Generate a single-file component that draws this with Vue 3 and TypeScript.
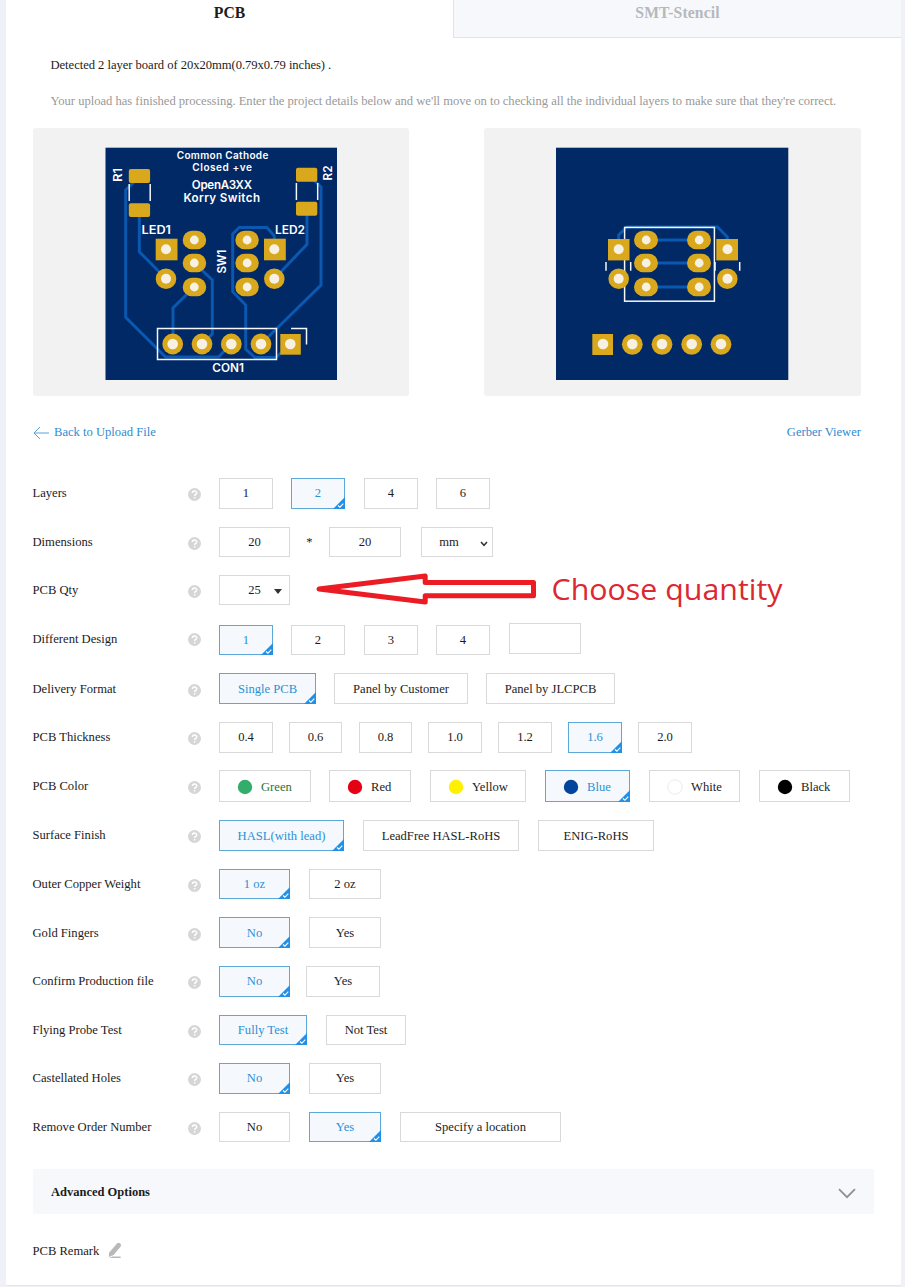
<script setup lang="ts">
interface Option {
  text: string
  gap: number
  width: number
  kind?: 'star' | 'select' | 'dropdown' | 'input' | 'color'
  active?: boolean
  color?: string
}
interface Row {
  label: string
  pitch: number
  height: number
  labelLine: number
  textLine: number
  icon: number
  options: Option[]
}

const opt = (text: string, gap: number, width: number, extra: Partial<Option> = {}): Option => ({ text, gap, width, ...extra })
const on = { active: true }
const row = (label: string, pitch: number, height: number, labelLine: number, textLine: number, icon: number, options: Option[]): Row =>
  ({ label, pitch, height, labelLine, textLine, icon, options })
const swatch = (text: string, gap: number, width: number, color: string, active = false): Option =>
  opt(text, gap, width, { kind: 'color', color, active })

const rows: Row[] = [
  row('Layers', 49, 31, 30, 30, 16.3, [opt('1', 0, 54), opt('2', 18, 54, on), opt('4', 19, 54), opt('6', 18, 54)]),
  row('Dimensions', 48, 30, 30, 30, 16, [
    opt('20', 0, 71), opt('*', 0, 39, { kind: 'star' }), opt('20', 0, 72), opt('mm', 20, 72, { kind: 'select' }),
  ]),
  row('PCB Qty', 50, 30, 30, 30, 16.5, [opt('25', 0, 71, { kind: 'dropdown' })]),
  row('Different Design', 48, 30, 28, 30, 14.7, [
    opt('1', 0, 54, on), opt('2', 18, 54), opt('3', 19, 54), opt('4', 18, 54), opt('', 19, 72, { kind: 'input' }),
  ]),
  row('Delivery Format', 49, 31, 32, 32, 17, [opt('Single PCB', 0, 97, on), opt('Panel by Customer', 18, 134), opt('Panel by JLCPCB', 18, 129)]),
  row('PCB Thickness', 48, 31, 30, 30, 16.6, [
    opt('0.4', 0, 54), opt('0.6', 16, 53), opt('0.8', 17, 53), opt('1.0', 16, 54), opt('1.2', 16, 54), opt('1.6', 16, 54, on), opt('2.0', 16, 54),
  ]),
  row('PCB Color', 50, 32, 32, 34, 17, [
    swatch('Green', 0, 92, '#33ad6c'), swatch('Red', 18, 82, '#e60013'), swatch('Yellow', 19, 96, '#fff000'),
    swatch('Blue', 19, 85, '#03459c', true), swatch('White', 19, 91, '#ffffff'), swatch('Black', 19, 91, '#000000'),
  ]),
  row('Surface Finish', 49, 31, 30, 32, 16.3, [opt('HASL(with lead)', 0, 125, on), opt('LeadFree HASL-RoHS', 19, 156), opt('ENIG-RoHS', 19, 116)]),
  row('Outer Copper Weight', 48, 30, 30, 30, 16.3, [opt('1 oz', 0, 71, on), opt('2 oz', 19, 72)]),
  row('Gold Fingers', 49, 31, 32, 32, 17, [opt('No', 0, 71, on), opt('Yes', 19, 72)]),
  row('Confirm Production file', 49, 31, 30, 30, 16.5, [opt('No', 0, 71, on), opt('Yes', 16, 74)]),
  row('Flying Probe Test', 48, 30, 30, 30, 16, [opt('Fully Test', 0, 88, on), opt('Not Test', 19, 80)]),
  row('Castellated Holes', 49, 31, 30, 30, 16.5, [opt('No', 0, 71, on), opt('Yes', 19, 72)]),
  row('Remove Order Number', 57, 30, 30, 30, 16, [opt('No', 0, 71), opt('Yes', 19, 72, on), opt('Specify a location', 19, 161)]),
]

const rowVars = (r: Row) => ({
  '--pitch': `${r.pitch}px`, '--h': `${r.height}px`, '--ll': `${r.labelLine}px`, '--tl': `${r.textLine - 2}px`, '--icon': `${r.icon - 6.5}px`,
})
const optVars = (o: Option) => ({ '--gap': `${o.gap}px`, '--w': `${o.width}px` })

const ovalRows = [240, 263, 287]
const frontPins = [172.7, 202, 231.3, 261]
const backPins = [632.3, 662, 691.7, 721]
</script>

<template>
  <div class="page">
    <main class="card">
      <nav class="tabs">
        <div class="tab current">PCB</div>
        <div class="tab other">SMT-Stencil</div>
      </nav>

      <p class="detected">Detected 2 layer board of 20x20mm(0.79x0.79 inches) .</p>
      <p class="notice">Your upload has finished processing. Enter the project details below and we'll move on to checking all the individual layers to make sure that they're correct.</p>

      <section class="previews">
        <svg class="preview front" viewBox="33 128 376 268">
          <rect class="board" x="105.5" y="147.7" width="231.5" height="232.3" />
          <g class="trace">
            <path d="M135 181L125.7 190V317.3L165.5 357H218.5L231 344" />
            <path d="M139.3 212V251.7L166 278.7" />
            <path d="M194.3 263L212.3 280V334L202 344" />
            <path d="M194.3 287L173 308V344" />
            <path d="M274.3 249V236L267 227.5H239.3L232.7 234V291.7L245.7 305V349L255 357.5H276L290 344" />
            <path d="M307 210V244.3L274.3 278.7" />
            <path d="M308 174L321 187V285L261 344" />
          </g>
          <g class="silk">
            <path d="M129.2 184V201M150.2 184V201M296.4 183V200M317.7 183V200" />
            <rect x="157.5" y="328.5" width="119" height="31" />
            <path d="M291 328.5H306.5V344.5" />
          </g>
          <g class="pad">
            <rect x="128.8" y="169" width="21.3" height="14" rx="2" />
            <rect x="128.8" y="203.2" width="21.3" height="13.8" rx="2" />
            <rect x="296" y="167.7" width="21.3" height="14" rx="2" />
            <rect x="296" y="201.7" width="21.3" height="14" rx="2" />
            <rect x="155.7" y="238.7" width="21.8" height="21.6" />
            <rect x="264" y="238.7" width="21.8" height="21.6" />
            <circle cx="166" cy="278.7" r="10.3" />
            <circle cx="274.3" cy="278.7" r="10.3" />
            <template v-for="y in ovalRows" :key="y">
              <rect x="182.7" :y="y - 9.2" width="23.5" height="18.4" rx="9.2" />
              <rect x="235.3" :y="y - 9.2" width="23.5" height="18.4" rx="9.2" />
            </template>
            <circle v-for="x in frontPins" :key="x" :cx="x" cy="344" r="10.4" />
            <rect x="280.3" y="334" width="20.5" height="20.7" />
          </g>
          <g class="hole">
            <circle cx="166" cy="249.3" r="5" />
            <circle cx="274.3" cy="249.3" r="5" />
            <circle cx="166" cy="278.7" r="5" />
            <circle cx="274.3" cy="278.7" r="5" />
            <template v-for="y in ovalRows" :key="y">
              <circle cx="194.3" :cy="y" r="4.4" />
              <circle cx="247.1" :cy="y" r="4.4" />
            </template>
            <circle v-for="x in frontPins" :key="x" :cx="x" cy="344" r="5.3" />
            <circle cx="290.3" cy="344" r="5.3" />
          </g>
          <g class="mark">
            <text class="small" x="176.7" y="158.8" textLength="91.6">Common Cathode</text>
            <text class="small" x="192.3" y="170.8" textLength="59.6">Closed +ve</text>
            <text x="191.8" y="189.2" textLength="60.2">OpenA3XX</text>
            <text x="183.5" y="202.2" textLength="76.5">Korry Switch</text>
            <text x="141.6" y="234" textLength="29.4" lengthAdjust="spacingAndGlyphs">LED1</text>
            <text x="275" y="234" textLength="30" lengthAdjust="spacingAndGlyphs">LED2</text>
            <text x="212.3" y="371.6" textLength="31.6" lengthAdjust="spacingAndGlyphs">CON1</text>
            <text transform="translate(122.3 182) rotate(-90)" textLength="14.2" lengthAdjust="spacingAndGlyphs">R1</text>
            <text transform="translate(332.3 180.4) rotate(-90)" textLength="15" lengthAdjust="spacingAndGlyphs">R2</text>
            <text transform="translate(226 273.6) rotate(-90)" textLength="24" lengthAdjust="spacingAndGlyphs">SW1</text>
          </g>
        </svg>

        <svg class="preview back" viewBox="484 128 377 268">
          <rect class="board" x="556" y="147.7" width="232.3" height="232.3" />
          <g class="trace">
            <path d="M618.7 249V235L627 227H717.5L727.3 237V249" />
            <path v-for="y in ovalRows" :key="y" :d="`M646 ${y}H699`" />
          </g>
          <g class="silk">
            <rect x="624.6" y="227.4" width="89.8" height="73.8" />
            <path d="M606 262V270.7M630.7 262V270.7M715 262V270.7M739.7 262V270.7" />
          </g>
          <g class="pad">
            <rect x="608" y="239" width="21.5" height="21.4" />
            <rect x="716.3" y="239" width="21.7" height="21.4" />
            <circle cx="618.7" cy="278.8" r="10.3" />
            <circle cx="727.3" cy="278.8" r="10.3" />
            <template v-for="y in ovalRows" :key="y">
              <rect x="634" :y="y - 9.2" width="24" height="18.4" rx="9.2" />
              <rect x="687" :y="y - 9.2" width="24" height="18.4" rx="9.2" />
            </template>
            <rect x="592.3" y="334" width="20.7" height="21" />
            <circle v-for="x in backPins" :key="x" :cx="x" cy="344.3" r="10.4" />
          </g>
          <g class="hole">
            <circle cx="618.7" cy="249.3" r="5" />
            <circle cx="727.5" cy="249.3" r="5" />
            <circle cx="618.7" cy="278.8" r="5" />
            <circle cx="727.5" cy="278.8" r="5" />
            <template v-for="y in ovalRows" :key="y">
              <circle cx="646.2" :cy="y" r="4.4" />
              <circle cx="699.2" :cy="y" r="4.4" />
            </template>
            <circle cx="603" cy="344" r="5.3" />
            <circle v-for="x in backPins" :key="x" :cx="x" cy="344" r="5.3" />
          </g>
        </svg>
      </section>

      <div class="links">
        <a class="link">
          <svg class="back-arrow" viewBox="0 0 17 14"><path d="M7 1L1 7L7 13M1 7H16" /></svg>
          <span>Back to Upload File</span>
        </a>
        <a class="link">Gerber Viewer</a>
      </div>

      <section class="form">
        <div v-for="r in rows" :key="r.label" class="row" :style="rowVars(r)">
          <div class="label">{{ r.label }}</div>
          <svg class="help" viewBox="0 0 13 13">
            <circle cx="6.5" cy="6.5" r="6.5" />
            <path d="M4.4 5.1C4.4 2.3 8.7 2.4 8.7 4.9C8.7 6.4 6.6 6.2 6.6 8M6.6 9V10.4" />
          </svg>
          <div class="options">
            <div
              v-for="(o, i) in r.options"
              :key="i"
              class="option"
              :class="[o.kind, { active: o.active, green: o.text === 'Green', white: o.text === 'White' }]"
              :style="optVars(o)"
            >
              <svg v-if="o.kind === 'color'" class="dot" viewBox="0 0 16 16"><circle cx="8" cy="8" r="7.2" :fill="o.color" /></svg>
              <span>{{ o.text }}</span>
              <svg v-if="o.active" class="corner" viewBox="0 0 12 12">
                <path class="fold" d="M12 0V12H0Z" />
                <path class="tick" d="M5 8.5L6.9 10.2L10.3 6.6" />
              </svg>
              <svg v-if="o.kind === 'dropdown'" class="caret" viewBox="0 0 8 5"><path d="M0 0H8L4 5Z" /></svg>
              <svg v-if="o.kind === 'select'" class="chevron" viewBox="0 0 8 6"><path d="M1 1L4 4.3L7 1" /></svg>
            </div>
          </div>
        </div>
      </section>

      <section class="advanced">
        <span>Advanced Options</span>
        <svg class="expand" viewBox="0 0 18 11"><path d="M1 1.2L9 9.2L17 1.2" /></svg>
      </section>

      <div class="remark">
        <span>PCB Remark</span>
        <svg class="pencil" viewBox="0 0 14 17">
          <path d="M9 1.5Q10.4 .1 12 1.3Q13.9 2.7 12.7 4.4L5.6 13L.8 15L1 10.8Z" />
          <path d="M4.5 14.6H12.6V16H1.2Z" />
        </svg>
      </div>
    </main>

    <svg class="callout" viewBox="310 565 490 50">
      <path d="M319 589L425.2 576V582.6H533.5V595.7H425.2V602Z" />
      <text x="551.5" y="600" textLength="231" lengthAdjust="spacingAndGlyphs">Choose quantity</text>
    </svg>
  </div>
</template>

<style>
body {
  margin: 0;
  background: #f0f1f6;
}
</style>

<style scoped>
* {
  box-sizing: border-box;
}
.page {
  position: relative;
  width: 905px;
  height: 1287px;
  padding: 0 4px 0 6px;
  overflow: hidden;
  background: #f0f1f6;
  color: #1c1c1c;
  font: 12.6px/20px "Liberation Serif", serif;
}
.card {
  height: 1286px;
  background: #fff;
  border-bottom: 1px solid #e6e6e9;
}
.tabs {
  display: flex;
  height: 38px;
  font-size: 15.7px;
  font-weight: bold;
  line-height: 26px;
  text-align: center;
}
.tab {
  width: 447px;
}
.tab.other {
  width: 448px;
  color: #b5b8bd;
  letter-spacing: 0.12px;
  background: #f7f8fb;
  border-left: 1px solid #e1e3e8;
  border-bottom: 1px solid #e1e3e8;
}
.detected,
.notice {
  margin: 17px 0 0 44.5px;
  letter-spacing: -0.035px;
  white-space: nowrap;
}
.notice {
  margin-top: 16px;
  letter-spacing: -0.022px;
  color: #999;
}
.previews {
  display: flex;
  gap: 75px;
  margin: 17px 0 0 27px;
}
.preview {
  display: block;
  height: 268px;
  background: #f2f2f2;
  border-radius: 3px;
}
.front {
  width: 376px;
}
.back {
  width: 377px;
}
.board {
  fill: #012965;
}
.trace {
  fill: none;
  stroke: #0a58b0;
  stroke-width: 3;
}
.silk {
  fill: none;
  stroke: #f4f7fb;
  stroke-width: 1.5;
}
.pad {
  fill: #d9a81c;
}
.hole {
  fill: #f7f1e4;
}
.mark {
  fill: #fff;
  font: 600 11.6px Inter, sans-serif;
}
.mark .small {
  font-size: 10px;
}
.links {
  display: flex;
  justify-content: space-between;
  margin: 26px 40px 0 27px;
}
.link {
  display: flex;
  color: #2f8bd2;
}
.back-arrow {
  width: 17px;
  height: 14px;
  margin: 4px 4px 0 0;
  fill: none;
  stroke: #5ba3da;
}
.form {
  margin: 36px 0 0 26.5px;
}
.row {
  display: flex;
  height: var(--pitch);
}
.label {
  width: 155.5px;
  line-height: var(--ll);
  white-space: nowrap;
}
.help {
  width: 13px;
  height: 13px;
  margin-top: var(--icon);
}
.help circle {
  fill: #d6d6d6;
}
.help path {
  fill: none;
  stroke: #fff;
  stroke-width: 1.5;
}
.options {
  display: flex;
  margin-left: 18px;
}
.option {
  position: relative;
  width: var(--w);
  height: var(--h);
  margin-left: var(--gap);
  border: 1px solid #d9d9d9;
  line-height: var(--tl);
  text-align: center;
  white-space: nowrap;
}
.option.star {
  border-color: transparent;
}
.option.input {
  height: 31px;
  margin-top: -2px;
}
.option.select {
  padding-right: 16px;
}
.option.color {
  display: flex;
  padding-left: 17px;
}
.option.green {
  color: #2e7237;
}
.option.active {
  color: #2b90d5;
  background: #f5f9fd;
  border-color: #5ba8d9;
}
.dot {
  width: 16px;
  height: 16px;
  margin: 8px 8px 0 0;
}
.white .dot circle {
  stroke: #e6e6e6;
  stroke-width: 0.8;
}
.corner {
  position: absolute;
  right: -1px;
  bottom: -1px;
  width: 12px;
  height: 12px;
}
.fold {
  fill: #2190e6;
}
.tick {
  fill: none;
  stroke: #fff;
  stroke-width: 1.1;
}
.caret {
  position: absolute;
  top: 13px;
  right: 7px;
  width: 8px;
  height: 5px;
  fill: #333;
}
.chevron {
  position: absolute;
  top: 13px;
  right: 4px;
  width: 8px;
  height: 6px;
  fill: none;
  stroke: #333;
  stroke-width: 1.5;
}
.advanced {
  display: flex;
  justify-content: space-between;
  width: 841px;
  height: 45px;
  margin-left: 27px;
  padding: 0 18px;
  background: #f7f8fb;
  font-size: 12.5px;
  font-weight: bold;
  line-height: 47px;
}
.expand {
  width: 18px;
  height: 11px;
  margin-top: 19px;
  fill: none;
  stroke: #8e9094;
  stroke-width: 1.8;
}
.remark {
  display: flex;
  margin: 27px 0 0 26.5px;
}
.pencil {
  width: 14px;
  height: 17px;
  margin: 1px 0 0 8.5px;
  fill: #b9b9b9;
}
.callout {
  position: absolute;
  left: 310px;
  top: 565px;
  width: 490px;
  height: 50px;
}
.callout path {
  fill: none;
  stroke: #ec1c24;
  stroke-width: 5;
  stroke-linejoin: round;
}
.callout text {
  fill: #dc2830;
  font: 29.5px "Open Sans", sans-serif;
}
</style>
